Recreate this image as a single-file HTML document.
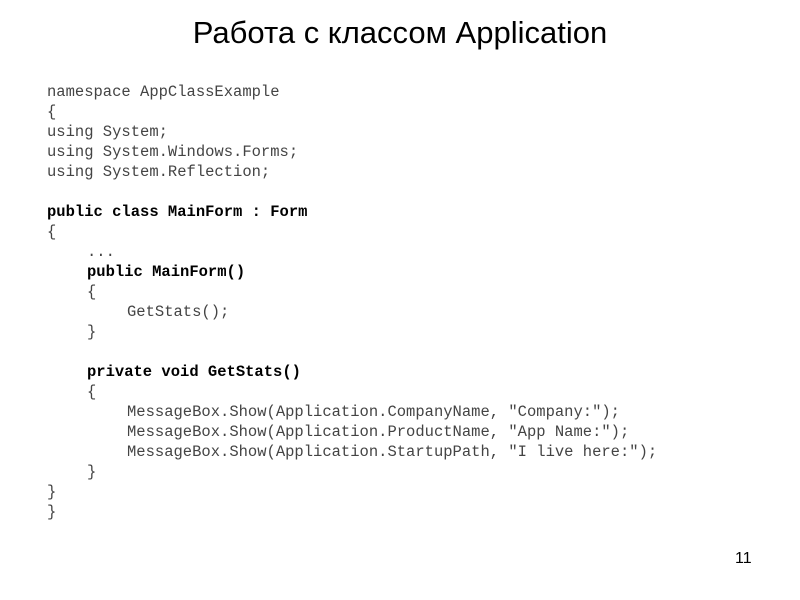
<!DOCTYPE html>
<html><head><meta charset="utf-8"><style>
body{margin:0;width:800px;height:600px;background:#fff;position:relative;overflow:hidden}
h1{position:absolute;left:0;width:800px;top:15px;margin:0;text-align:center;font:31px "Liberation Sans",sans-serif;line-height:36px;color:#000}
.c{position:absolute;left:47px;top:82px;margin:0;font:15.5px "Liberation Mono",monospace;line-height:20px;color:#444}
.c div{height:20px;white-space:pre}
.i1{padding-left:40px}.i2{padding-left:80px}
b{color:#000}
.n{position:absolute;left:735px;top:550px;font:16px "Liberation Sans",sans-serif;color:#000}
</style></head><body>
<h1>Работа с классом Application</h1>
<div class="c"><div>namespace AppClassExample</div><div>{</div><div>using System;</div><div>using System.Windows.Forms;</div><div>using System.Reflection;</div><div></div><div><b>public class MainForm : Form</b></div><div>{</div><div class="i1">...</div><div class="i1"><b>public MainForm()</b></div><div class="i1">{</div><div class="i2">GetStats();</div><div class="i1">}</div><div></div><div class="i1"><b>private void GetStats()</b></div><div class="i1">{</div><div class="i2">MessageBox.Show(Application.CompanyName, "Company:");</div><div class="i2">MessageBox.Show(Application.ProductName, "App Name:");</div><div class="i2">MessageBox.Show(Application.StartupPath, "I live here:");</div><div class="i1">}</div><div>}</div><div>}</div></div>
<div class="n">11</div>
</body></html>
